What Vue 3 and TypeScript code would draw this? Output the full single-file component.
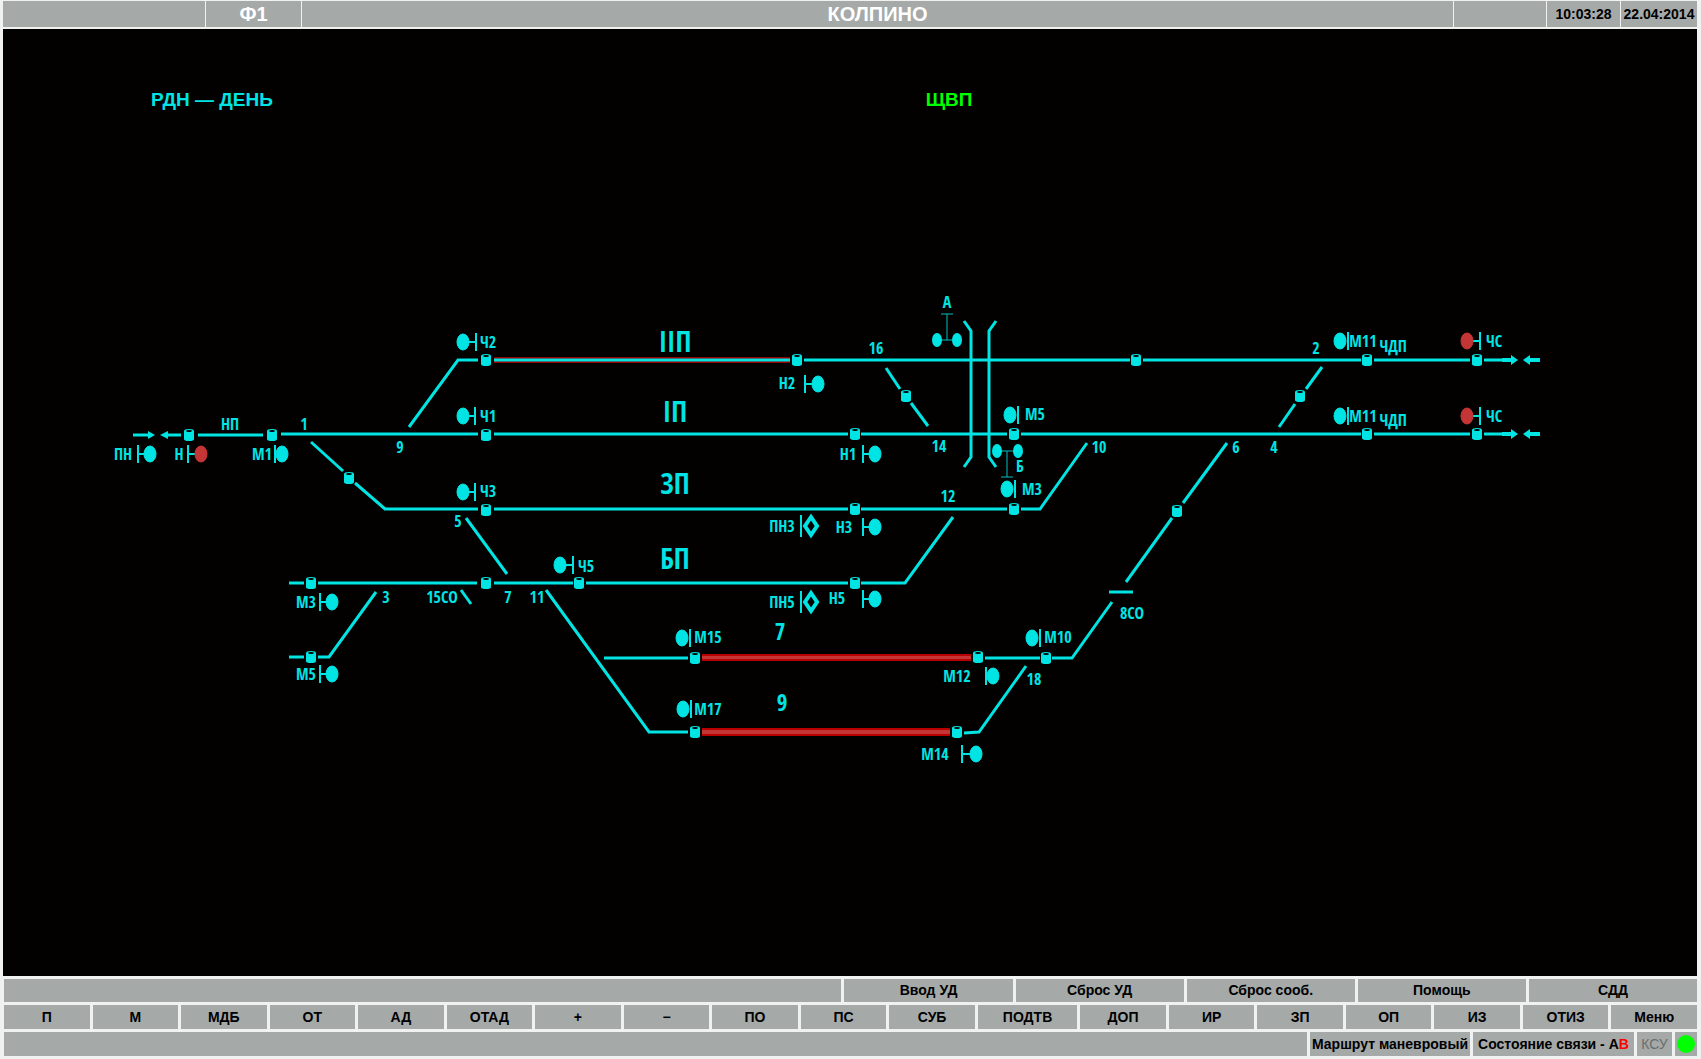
<script setup lang="ts">
interface Label {
  text: string
  x: number
  y: number
  kind?: 'track' | 'siding'
}

interface Signal {
  x: number
  y: number
  bar: number
  stem?: boolean
  closed?: boolean
}

type Point = [number, number]

const commands = ['Ввод УД', 'Сброс УД', 'Сброс сооб.', 'Помощь', 'СДД']

const keys = [
  'П', 'М', 'МДБ', 'ОТ', 'АД', 'ОТАД', '+', '−', 'ПО', 'ПС',
  'СУБ', 'ПОДТВ', 'ДОП', 'ИР', 'ЗП', 'ОП', 'ИЗ', 'ОТИЗ', 'Меню',
]

// Free track sections
const sections: string[] = [
  // track II
  'M409 427 L458 360 H478', 'M494 360 H790', 'M804 360 H1130', 'M1143 360 H1361',
  'M1374 360 H1470', 'M1484 360 H1512',
  // track I
  'M133 435 H149', 'M166 435 H181', 'M198 435 H263', 'M281 434 H478', 'M494 434 H848',
  'M861 434 H1007', 'M1021 434 H1361', 'M1374 434 H1470', 'M1484 434 H1512',
  // track 3
  'M311 442 L343 471', 'M355 483 L385 509 H478', 'M494 509 H848', 'M861 509 H1007',
  'M1021 509 H1040 L1087 443',
  // track B
  'M289 583 H304', 'M318 583 H477', 'M494 583 H573', 'M586 583 H848',
  'M861 583 H905 L953 517', 'M289 657 H304', 'M318 657 H329 L376 592',
  // turnouts and sidings
  'M466 518 L507 574', 'M461 590 L471 604', 'M546 590 L649 732 H688', 'M604 658 H688',
  'M985 658 H1040', 'M1052 658 H1072 L1112 602', 'M1109 592 H1133', 'M1126 582 L1172 518',
  'M1183 503 L1227 443', 'M964 733 L979 732 L1026 666',
  'M886 368 L900 389', 'M911 403 L928 426', 'M1322 367 L1306 389', 'M1295 404 L1279 427',
  // pedestrian crossing
  'M964 321 L971 331 V457 L964 467', 'M996 321 L989 331 V457 L996 467',
]

const arrows: string[] = [
  '148,431 155,435 148,439', '168,431 160,435 168,439',
  '1511,355 1518,360 1511,365', '1530,355 1523,360 1530,365',
  '1511,429 1518,434 1511,439', '1530,429 1523,434 1530,439',
]

const joints: Point[] = [
  [189, 435], [272, 435], [486, 435], [855, 434], [1014, 434], [1367, 434], [1477, 434],
  [486, 360], [797, 360], [1136, 360], [1367, 360], [1477, 360],
  [349, 478], [486, 510], [855, 509], [1014, 509],
  [311, 583], [486, 583], [579, 583], [855, 583], [311, 657],
  [695, 658], [978, 657], [1046, 658], [695, 732], [957, 732],
  [906, 396], [1300, 396], [1177, 511],
]

const signals: Signal[] = [
  { x: 150, y: 454, bar: 138, stem: true },
  { x: 201, y: 454, bar: 188, stem: true, closed: true },
  { x: 282, y: 454, bar: 275 },
  { x: 463, y: 342, bar: 476, stem: true },
  { x: 463, y: 416, bar: 475, stem: true },
  { x: 463, y: 492, bar: 475, stem: true },
  { x: 560, y: 565, bar: 573, stem: true },
  { x: 332, y: 602, bar: 320, stem: true },
  { x: 332, y: 674, bar: 320, stem: true },
  { x: 818, y: 384, bar: 805, stem: true },
  { x: 875, y: 454, bar: 863, stem: true },
  { x: 875, y: 527, bar: 863, stem: true },
  { x: 875, y: 599, bar: 863, stem: true },
  { x: 1010, y: 415, bar: 1018 },
  { x: 1007, y: 489, bar: 1015 },
  { x: 682, y: 638, bar: 690 },
  { x: 683, y: 709, bar: 691 },
  { x: 993, y: 676, bar: 986 },
  { x: 1032, y: 638, bar: 1040 },
  { x: 976, y: 754, bar: 962, stem: true },
  { x: 1340, y: 341, bar: 1348 },
  { x: 1340, y: 416, bar: 1348 },
  { x: 1467, y: 341, bar: 1480, stem: true, closed: true },
  { x: 1467, y: 416, bar: 1480, stem: true, closed: true },
]

const diamonds: Point[] = [[811, 526], [811, 602]]

const labels: Label[] = [
  { text: 'ПН', x: 123, y: 460 },
  { text: 'Н', x: 179, y: 460 },
  { text: 'М1', x: 262, y: 460 },
  { text: 'НП', x: 230, y: 430 },
  { text: '1', x: 304, y: 430 },
  { text: '9', x: 400, y: 453 },
  { text: 'Ч2', x: 488, y: 348 },
  { text: 'Ч1', x: 488, y: 422 },
  { text: 'Ч3', x: 488, y: 497 },
  { text: '5', x: 458, y: 527 },
  { text: 'М3', x: 306, y: 608 },
  { text: 'М5', x: 306, y: 680 },
  { text: '3', x: 386, y: 603 },
  { text: '15СО', x: 442, y: 603 },
  { text: '7', x: 508, y: 603 },
  { text: '11', x: 537, y: 603 },
  { text: 'Ч5', x: 586, y: 572 },
  { text: 'М15', x: 708, y: 643 },
  { text: 'М17', x: 708, y: 715 },
  { text: 'М12', x: 957, y: 682 },
  { text: '18', x: 1034, y: 685 },
  { text: 'М10', x: 1058, y: 643 },
  { text: 'М14', x: 935, y: 760 },
  { text: '8СО', x: 1132, y: 619 },
  { text: 'ПН3', x: 782, y: 532 },
  { text: 'ПН5', x: 782, y: 608 },
  { text: 'Н3', x: 844, y: 533 },
  { text: 'Н5', x: 837, y: 604 },
  { text: 'Н2', x: 787, y: 389 },
  { text: 'Н1', x: 848, y: 460 },
  { text: '16', x: 876, y: 354 },
  { text: '14', x: 939, y: 452 },
  { text: '12', x: 948, y: 502 },
  { text: 'А', x: 947, y: 308 },
  { text: 'Б', x: 1020, y: 472 },
  { text: 'М5', x: 1035, y: 420 },
  { text: 'М3', x: 1032, y: 495 },
  { text: '10', x: 1099, y: 453 },
  { text: '6', x: 1236, y: 453 },
  { text: '4', x: 1274, y: 453 },
  { text: '2', x: 1316, y: 354 },
  { text: 'М11', x: 1363, y: 347 },
  { text: 'М11', x: 1363, y: 422 },
  { text: 'ЧДП', x: 1393, y: 352 },
  { text: 'ЧДП', x: 1393, y: 426 },
  { text: 'ЧС', x: 1494, y: 347 },
  { text: 'ЧС', x: 1494, y: 422 },
  { text: 'IIП', x: 675, y: 352, kind: 'track' },
  { text: 'IП', x: 675, y: 422, kind: 'track' },
  { text: 'ЗП', x: 675, y: 494, kind: 'track' },
  { text: 'БП', x: 675, y: 569, kind: 'track' },
  { text: '7', x: 780, y: 640, kind: 'siding' },
  { text: '9', x: 782, y: 711, kind: 'siding' },
]
</script>

<template>
  <div class="station">
    <header class="bar top">
      <span class="cell"></span>
      <span class="cell title">Ф1</span>
      <h1 class="cell title">КОЛПИНО</h1>
      <span class="cell"></span>
      <time class="cell">10:03:28</time>
      <time class="cell">22.04:2014</time>
    </header>

    <main class="board">
      <svg class="scheme" viewBox="3 29 1694 947">
        <text class="mode" x="151" y="106">РДН — ДЕНЬ</text>
        <text class="mode power" x="949" y="106" text-anchor="middle">ЩВП</text>

        <rect class="lock" x="494" y="357" width="296" height="6" />
        <path v-for="d in sections" :key="d" class="rail" :d="d" />
        <path class="shaft" d="M1502 360 H1512 M1528 360 H1540 M1502 434 H1512 M1528 434 H1540" />
        <polygon v-for="p in arrows" :key="p" class="fill" :points="p" />

        <rect class="busy-edge" x="702" y="654" width="269" height="7" />
        <rect class="busy" x="702" y="656" width="269" height="3" />
        <rect class="busy-edge" x="702" y="728" width="248" height="8" />
        <rect class="busy" x="702" y="730" width="248" height="4" />

        <g v-for="[x, y] in joints" :key="`${x}-${y}`" :transform="`translate(${x} ${y})`">
          <path class="fill" d="M-5 -4 Q-5 -6 0 -6 Q5 -6 5 -4 V4 Q5 6 0 6 Q-5 6 -5 4 Z" />
          <ellipse class="hole" cx="0" cy="-4" rx="3" ry="1" />
        </g>

        <g v-for="s in signals" :key="`s${s.x}-${s.y}`">
          <path v-if="s.stem" class="stem" :d="`M${s.bar} ${s.y} H${s.x}`" />
          <path class="stem" :d="`M${s.bar} ${s.y - 9} V${s.y + 9}`" />
          <ellipse class="lens" :class="{ closed: s.closed }" :cx="s.x" :cy="s.y" rx="6" ry="8" />
        </g>

        <g v-for="[x, y] in diamonds" :key="`d${y}`" :transform="`translate(${x} ${y})`">
          <path class="stem" d="M-10 -11 V11" />
          <path class="rhomb" d="M0 -9 L6 0 L0 9 L-6 0 Z" />
        </g>

        <path class="thin" d="M941 314 H953 M947 314 V340 M937 340 H957" />
        <ellipse class="fill" cx="937" cy="340" rx="5" ry="7" />
        <ellipse class="fill" cx="957" cy="340" rx="5" ry="7" />
        <path class="thin" d="M1001 477 H1013 M1007 477 V451 M997 451 H1018" />
        <ellipse class="fill" cx="997" cy="451" rx="5" ry="7" />
        <ellipse class="fill" cx="1018" cy="451" rx="5" ry="7" />

        <text
          v-for="l in labels"
          :key="`${l.text}-${l.x}-${l.y}`"
          class="label"
          :class="l.kind"
          :x="l.x"
          :y="l.y"
        >{{ l.text }}</text>
      </svg>
    </main>

    <footer class="panel">
      <div class="bar commands">
        <span class="cell"></span>
        <button v-for="c in commands" :key="c" type="button" class="cell">{{ c }}</button>
      </div>
      <div class="bar keys">
        <button v-for="k in keys" :key="k" type="button" class="cell">{{ k }}</button>
      </div>
      <div class="bar status">
        <span class="cell"></span>
        <span class="cell">Маршрут маневровый</span>
        <span class="cell">Состояние связи - А<span class="fault">В</span></span>
        <span class="cell off">КСУ</span>
        <span class="cell"><span class="lamp"></span></span>
      </div>
    </footer>
  </div>
</template>

<style>
body {
  margin: 0;
  background: #f0f2f1;
}
</style>

<style scoped>
.station {
  box-sizing: border-box;
  padding: 1px 4px 3px 3px;
  font-family: "Liberation Sans", Arial, sans-serif;
  font-size: 14px;
  font-weight: bold;
  color: #000;
}

.bar {
  display: grid;
}

.cell {
  display: flex;
  align-items: center;
  justify-content: center;
  box-sizing: border-box;
  min-width: 0;
  margin: 0;
  padding: 0;
  border: 0;
  background: #a5a9a8;
  color: inherit;
  font: inherit;
  white-space: nowrap;
}

.top {
  grid-template-columns: 202px 95px 1fr 92px 73px 76px;
  grid-auto-rows: 26px;
  gap: 1px;
  padding-bottom: 2px;
}

.title {
  font-size: 20px;
  color: #fff;
}

.board {
  background: #030000;
}

.scheme {
  display: block;
  width: 100%;
  height: auto;
}

.rail {
  fill: none;
  stroke: #00e4e4;
  stroke-width: 3px;
}

.shaft {
  fill: none;
  stroke: #00e4e4;
  stroke-width: 4px;
}

.fill {
  fill: #00e4e4;
}

.hole {
  fill: #030000;
}

.stem {
  fill: none;
  stroke: #00e4e4;
  stroke-width: 2px;
}

.lens {
  fill: #00e4e4;
  stroke: #00e4e4;
  stroke-width: 1px;
}

.closed {
  fill: #c43535;
  stroke: #c43535;
}

.thin {
  fill: none;
  stroke: #00c0c0;
  stroke-width: 1px;
}

.rhomb {
  fill: none;
  stroke: #00e4e4;
  stroke-width: 4px;
}

.lock {
  fill: #900000;
}

.busy-edge {
  fill: #b80000;
}

.busy {
  fill: #c43535;
}

.mode {
  fill: #00e4e4;
  font-size: 19px;
}

.power {
  fill: #0f0;
}

.label {
  fill: #00e4e4;
  font-family: "Open Sans Condensed", "Noto Sans Condensed", "Roboto Condensed", "Liberation Sans", sans-serif;
  font-size: 16px;
  font-weight: bold;
  text-anchor: middle;
}

.track {
  font-size: 28px;
}

.siding {
  font-size: 23px;
}

.panel {
  display: grid;
  gap: 3px;
  padding: 3px 0 0 1px;
}

.panel .bar {
  grid-auto-rows: 24px;
  gap: 3px;
}

.panel .commands {
  grid-template-columns: 837fr repeat(5, 168fr);
  grid-auto-rows: 23px;
}

.commands .cell {
  padding-bottom: 2px;
}

.keys {
  grid-template-columns: repeat(11, 86fr) 100fr repeat(7, 86fr);
}

.status {
  grid-template-columns: 1fr 160px 161px 35px 22px;
}

.fault {
  color: #f00;
}

.off {
  color: #6c6e6d;
  font-weight: normal;
}

.lamp {
  width: 18px;
  height: 18px;
  border-radius: 50%;
  background: #0f0;
}
</style>
